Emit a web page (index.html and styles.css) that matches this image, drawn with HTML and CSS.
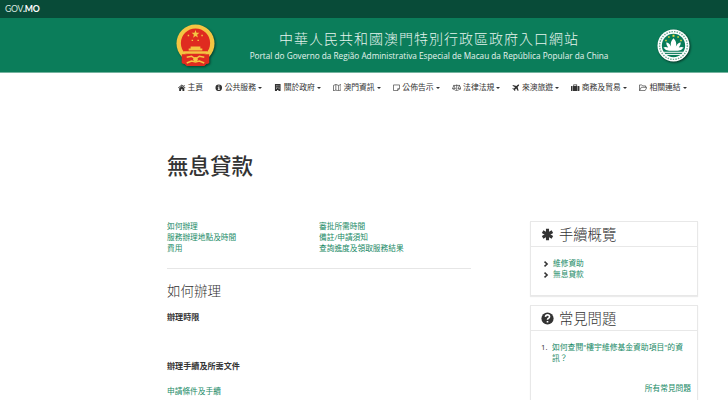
FILE: index.html
```html
<!DOCTYPE html>
<html lang="zh-Hant">
<head>
<meta charset="UTF-8">
<meta name="viewport" content="width=device-width, initial-scale=1.0">
<title>無息貸款 - GOV.MO</title>
<link rel="stylesheet" href="styles.css">
</head>
<body>

<div class="topbar">GOV<b>.MO</b></div>

<header class="banner">
    <svg class="emblem" viewBox="0 0 40 44">
        <path class="red" d="M6 26h28v14q-4 1-5 3H11q-1-2-5-3z"/>
        <circle class="gold" cx="20" cy="20" r="19.5"/>
        <circle class="red" cx="20" cy="19.500" r="15"/>
        <path class="red" d="M6 31h28v9q-4 1-6 3H12q-2-2-6-3z"/>
        <path class="gold" d="M20 6l1 3h3l-2.400 1.900.9 3L20 12.200 17.500 14l.9-3L16 9h3zM12 11h1.500v1.500H12zM26 11h1.500v1.500H26zM16 16h1.500v1.500H16zM22 16h1.500v1.500H22z"/>
        <path class="gold" d="M15 23h10v2h2v2H13v-2h2zM8 28h24v2.500H8z"/>
        <path class="gold-line" d="M11 34l5-1 4 3 4-3 5 1M11 40l5-2 4 1 4-1 5 2"/>
        <circle class="gold" cx="20" cy="36" r="2.300"/>
    </svg>
    <div class="banner-text">
        <div class="name-zh">中華人民共和國澳門特別行政區政府入口網站</div>
        <div class="name-pt">Portal do Governo da Região Administrativa Especial de Macau da República Popular da China</div>
    </div>
    <svg class="seal" viewBox="0 0 34 34">
        <circle cx="17" cy="17" r="16.500" fill="#fff"/>
        <circle cx="17" cy="17" r="14.300" fill="none" stroke="#6fa893" stroke-width="1.500" stroke-dasharray="1.500 1.200"/>
        <circle cx="17" cy="17" r="12" fill="#087c59"/>
        <path fill="#fff" d="M17 9.500q4 4 2.500 8.500 2-4 5-4 0 3-2 5 3-1 5 0-2 3-6 3.500h-9Q8.500 22 6.500 19q2-1 5 0-2-2-2-5 3 0 5 4Q13 13.500 17 9.500z"/>
        <path fill="none" stroke="#fff" d="M7 24h20M9 26.200h16"/>
        <path fill="#f2dc3c" d="M16 6h2v2h-2zM11.500 7.500h1.500V9h-1.500zM21 7.500h1.500V9H21zM8.500 11H10v1.500H8.500zM24 11h1.500v1.500H24z"/>
    </svg>
</header>

<nav class="menu">
    <a class="plain"><svg viewBox="0 0 16 16"><path d="M8 1l8 7-1 1-7-6-7 6-1-1zM2.500 9L8 4.500 13.500 9v6H9.500v-4h-3v4h-4zM12 2h2v3l-2-2z"/></svg>主頁</a>
    <a><svg viewBox="0 0 16 16"><path fill-rule="evenodd" d="M8 1a7 7 0 1 0 0 14A7 7 0 0 0 8 1zM7 3h2.500v2.500H7zM6 7h3.500v4.500h1V13H6v-1.500h1v-3H6z"/></svg>公共服務</a>
    <a><svg viewBox="0 0 16 16"><path fill-rule="evenodd" d="M2 0h12v16H9.500v-3h-3v3H2zM4.500 3v1.500H6V3zM7.300 3v1.500h1.500V3zM10 3v1.500h1.500V3zM4.500 6v1.500H6V6zM7.300 6v1.500h1.500V6zM10 6v1.500h1.500V6zM4.500 9v1.500H6V9zM10 9v1.500h1.500V9z"/></svg>關於政府</a>
    <a class="line"><svg viewBox="0 0 18 16"><path d="M1 3l5-2 6 2 5-2v12l-5 2-6-2-5 2zM6 1v12M12 3v12"/></svg>澳門資訊</a>
    <a class="line"><svg viewBox="0 0 16 16"><path d="M1 2h13v8l-4 4H1zM14 10h-4v4"/></svg>公佈告示</a>
    <a class="line"><svg viewBox="0 0 20 16"><path d="M10 1v13M6 14.500h8M3 3h14M4 3l-3 7h6zM16 3l-3 7h6zM1 10q3 3 6 0M13 10q3 3 6 0"/></svg>法律法規</a>
    <a><svg viewBox="0 0 16 16"><path d="M15 1q-2-.5-3.500 1L9.500 4 2 2 1 3.500l5.500 3.500L4 9.500 1.500 9l-1 1L4 12l2 3.500 1-1L6.500 12 9 9.500l3.500 5.500 1.500-1-2-7.500 2-2Q15.500 3 15 1z"/></svg>來澳旅遊</a>
    <a><svg viewBox="0 0 18 16"><path fill-rule="evenodd" d="M5 4V1h8v3h1v11H4V4zM6.500 4h5V2.500h-5zM0 5q0-1 1-1h2v11H1q-1 0-1-1zM15 4h2q1 0 1 1v9q0 1-1 1h-2z"/></svg>商務及貿易</a>
    <a class="line"><svg viewBox="0 0 18 16"><path d="M1 14V2h5l2 2h6v3M1 14l4-7h12l-4 7z"/></svg>相關連結</a>
</nav>

<div class="page">
    <main>
        <h1>無息貸款</h1>
        <div class="toc">
            <ul>
                <li><a>如何辦理</a></li>
                <li><a>服務辦理地點及時間</a></li>
                <li><a>費用</a></li>
            </ul>
            <ul>
                <li><a>審批所需時間</a></li>
                <li><a>備註/申請須知</a></li>
                <li><a>查詢進度及領取服務結果</a></li>
            </ul>
        </div>
        <h2>如何辦理</h2>
        <h3>辦理時限</h3>
        <h3 class="docs">辦理手續及所需文件</h3>
        <p><a>申請條件及手續</a></p>
    </main>

    <aside>
        <section class="card overview">
            <h4><svg viewBox="0 0 16 16"><path class="asterisk" d="M8 1v14M2 4.500l12 7M14 4.500l-12 7"/></svg>手續概覽</h4>
            <ul>
                <li><svg viewBox="0 0 8 8"><path d="M2 .8L5.500 4 2 7.200"/></svg><a>維修資助</a></li>
                <li><svg viewBox="0 0 8 8"><path d="M2 .8L5.500 4 2 7.200"/></svg><a>無息貸款</a></li>
            </ul>
        </section>
        <section class="card faq">
            <h4><svg viewBox="0 0 16 16"><circle cx="8" cy="8" r="7.500"/><path class="question" d="M5.500 6Q5.700 3.600 8 3.600q2.500 0 2.500 2.200 0 1.200-1.300 1.900Q8 8.300 8 9.600M8 11v2"/></svg>常見問題</h4>
            <ol>
                <li><span>1.</span><a>如何查閱"樓宇維修基金資助項目"的資訊？</a></li>
            </ol>
            <div class="more"><a>所有常見問題</a></div>
        </section>
    </aside>
</div>

</body>
</html>
```
FILE: styles.css
```css
* {
    box-sizing: border-box;
}
body {
    margin: 0;
    height: 400px;
    overflow: hidden;
    background-color: #fff;
    color: #333;
    font-family: "Open Sans", "Noto Sans CJK TC", sans-serif;
    font-size: 7.7px;
    line-height: 11px;
}
h1, h2, h3, h4, p, ul, ol {
    margin: 0;
    padding: 0;
    list-style: none;
}
a {
    color: #188a66;
}

/* header */
.topbar {
    height: 18px;
    padding-left: 5px;
    background-color: #084b38;
    color: #d5e5df;
    font-family: Lato, sans-serif;
    font-size: 8.7px;
    letter-spacing: -0.3px;
    line-height: 18px;
}
.topbar b {
    color: #fff;
}
.banner {
    display: flex;
    justify-content: space-between;
    height: 55px;
    padding: 6px 38px 0 176px;
    background-color: #0b7d5a;
    border-bottom: 1px solid #75b39f;
    color: #e6f4ee;
}
.emblem {
    width: 39px;
    height: 43px;
    filter: drop-shadow(1px 1px 1px rgba(0,0,0,0.5));
}
.red {
    fill: #df2b20;
}
.gold {
    fill: #f4c542;
}
.gold-line {
    fill: none;
    stroke: #f4c542;
    stroke-width: 1.5;
}
.seal {
    width: 33px;
    height: 33px;
    margin-top: 5px;
    filter: drop-shadow(1px 1px 1px rgba(0,0,0,0.6));
}
.banner-text {
    padding: 6px 14px 0 0;
    text-align: center;
    white-space: nowrap;
}
.name-zh {
    font-size: 14px;
    font-weight: 300;
    letter-spacing: 1px;
    line-height: 18px;
}
.name-pt {
    font-size: 8.22px;
    line-height: 15px;
}

/* menu */
.menu {
    display: flex;
    gap: 12.2px;
    height: 29px;
    padding-left: 178px;
    align-items: center;
}
.menu a {
    display: flex;
    align-items: center;
    color: #333;
    font-size: 7.8px;
    white-space: nowrap;
}
.menu svg {
    height: 7.5px;
    margin-right: 2px;
    fill: #333;
}
.menu .line path {
    fill: none;
    stroke: #444;
    stroke-width: 1.5;
}
.menu a::after {
    content: "";
    margin-left: 2px;
    border: 2px solid transparent;
    border-top-color: #333;
    border-bottom: 0;
}
.menu .plain::after {
    display: none;
}

/* content */
.page {
    display: flex;
    justify-content: space-between;
    padding: 0 30px 0 167px;
}
main {
    width: 304px;
}
h1 {
    margin-top: 48px;
    font-size: 21.5px;
    font-weight: 500;
    line-height: 32px;
}
.toc {
    display: grid;
    grid-template-columns: 1fr 1fr;
    margin-top: 39px;
    padding-bottom: 14px;
    border-bottom: 1px solid #e6e6e6;
}
h2 {
    margin-top: 12px;
    font-size: 13.5px;
    font-weight: 300;
    line-height: 20px;
}
h3 {
    margin-top: 10px;
    font-size: 8.1px;
    line-height: 12px;
}
h3.docs {
    margin-top: 37px;
}
p {
    margin-top: 14px;
}

/* sidebar */
aside {
    width: 168px;
    margin-top: 119px;
}
.card {
    margin-bottom: 9px;
    border: 1px solid #e8e8e8;
    box-shadow: 0 1px 1px rgba(0,0,0,0.08);
}
.overview {
    height: 75px;
}
.faq {
    height: 100px;
}
h4 {
    display: flex;
    align-items: center;
    height: 25px;
    padding-left: 10px;
    border-bottom: 1px solid #e8e8e8;
    font-size: 14.3px;
    font-weight: 300;
}
h4 svg {
    width: 13px;
    height: 13px;
    margin-right: 5px;
    fill: #333;
}
.asterisk {
    stroke: #333;
    stroke-width: 3.8;
}
.question {
    fill: none;
    stroke: #fff;
    stroke-width: 2;
}
.overview ul {
    padding: 11px 0 0 12px;
}
.overview li {
    display: flex;
    align-items: center;
}
.overview li svg {
    width: 6px;
    height: 6px;
    margin-right: 4px;
    fill: none;
    stroke: #333;
    stroke-width: 2;
}
.faq ol {
    padding: 11px 8px 0 10px;
}
.faq li {
    display: flex;
    font-size: 7.8px;
}
.faq span {
    flex: 0 0 11px;
}
.more {
    margin-top: 19px;
    padding-right: 6px;
    text-align: right;
}
```
